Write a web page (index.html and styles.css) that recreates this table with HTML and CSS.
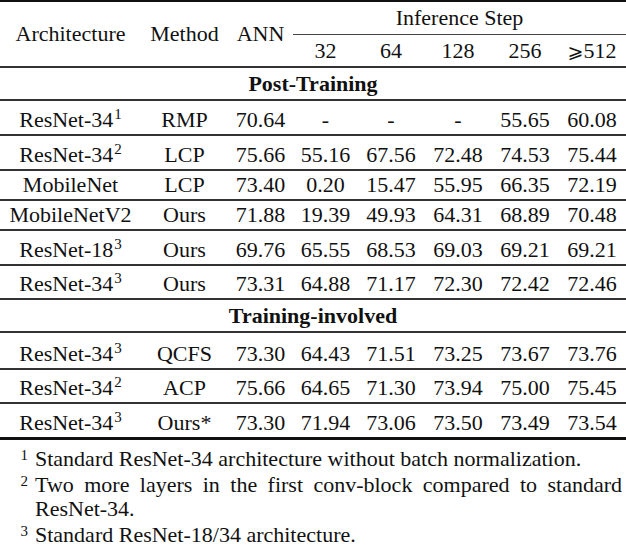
FILE: index.html
```html
<!DOCTYPE html>
<html>
<head>
<meta charset="utf-8">
<link rel="stylesheet" href="styles.css">
</head>
<body>
<div class="page">
<table class="results">
  <colgroup>
    <col class="c-arch"><col class="c-meth"><col class="c-ann">
    <col class="c-32"><col class="c-64"><col class="c-128"><col class="c-256"><col class="c-512">
  </colgroup>
  <thead>
    <tr class="hrow1">
      <th rowspan="2" class="hcell rs">Architecture</th>
      <th rowspan="2" class="hcell rs">Method</th>
      <th rowspan="2" class="hcell rs">ANN</th>
      <th colspan="5" class="hcell steps">Inference Step</th>
    </tr>
    <tr class="hrow2">
      <th class="hcell sub">32</th>
      <th class="hcell sub">64</th>
      <th class="hcell sub">128</th>
      <th class="hcell sub">256</th>
      <th class="hcell sub"><span class="geq">⩾</span>512</th>
    </tr>
  </thead>
  <tbody>
    <tr class="section"><td colspan="8">Post-Training</td></tr>
    <tr class="r33"><td>ResNet-34<span class="sup">1</span></td><td>RMP</td><td>70.64</td><td>-</td><td>-</td><td>-</td><td>55.65</td><td>60.08</td></tr>
    <tr class="r33"><td>ResNet-34<span class="sup">2</span></td><td>LCP</td><td>75.66</td><td>55.16</td><td>67.56</td><td>72.48</td><td>74.53</td><td>75.44</td></tr>
    <tr class="r28"><td>MobileNet</td><td>LCP</td><td>73.40</td><td>0.20</td><td>15.47</td><td>55.95</td><td>66.35</td><td>72.19</td></tr>
    <tr class="r28"><td>MobileNetV2</td><td>Ours</td><td>71.88</td><td>19.39</td><td>49.93</td><td>64.31</td><td>68.89</td><td>70.48</td></tr>
    <tr class="r33"><td>ResNet-18<span class="sup">3</span></td><td>Ours</td><td>69.76</td><td>65.55</td><td>68.53</td><td>69.03</td><td>69.21</td><td>69.21</td></tr>
    <tr class="r32"><td>ResNet-34<span class="sup">3</span></td><td>Ours</td><td>73.31</td><td>64.88</td><td>71.17</td><td>72.30</td><td>72.42</td><td>72.46</td></tr>
    <tr class="section"><td colspan="8">Training-involved</td></tr>
    <tr class="r35"><td>ResNet-34<span class="sup">3</span></td><td>QCFS</td><td>73.30</td><td>64.43</td><td>71.51</td><td>73.25</td><td>73.67</td><td>73.76</td></tr>
    <tr class="r32"><td>ResNet-34<span class="sup">2</span></td><td>ACP</td><td>75.66</td><td>64.65</td><td>71.30</td><td>73.94</td><td>75.00</td><td>75.45</td></tr>
    <tr class="r33 last"><td>ResNet-34<span class="sup">3</span></td><td>Ours*</td><td>73.30</td><td>71.94</td><td>73.06</td><td>73.50</td><td>73.49</td><td>73.54</td></tr>
  </tbody>
</table>
<div class="notes">
  <div class="note"><span class="mark">1</span><span class="ntext">Standard ResNet-34 architecture without batch normalization.</span></div>
  <div class="note"><span class="mark">2</span><span class="ntext">Two more layers in the first conv-block compared to standard ResNet-34.</span></div>
  <div class="note"><span class="mark">3</span><span class="ntext">Standard ResNet-18/34 architecture.</span></div>
</div>
</div>
</body>
</html>
```

FILE: styles.css
```css
html, body {
  margin: 0;
  padding: 0;
  background: #fff;
}
.page {
  width: 626px;
  font-family: "Liberation Serif", "Times New Roman", serif;
  font-size: 22px;
  color: #111;
}
.results {
  width: 626px;
  table-layout: fixed;
  border-collapse: separate;
  border-spacing: 0;
  border-top: 2px solid #111;
  font-family: "Liberation Serif", "Times New Roman", serif;
}
.c-arch { width: 141px; }
.c-meth { width: 87px; }
.c-ann { width: 65px; }
.c-32 { width: 65px; }
.c-64 { width: 66px; }
.c-128 { width: 68px; }
.c-256 { width: 66px; }
.c-512 { width: 68px; }

.results th, .results td {
  padding: 0;
  text-align: center;
  white-space: nowrap;
  line-height: 22px;
  font-weight: normal;
}
.hcell { vertical-align: middle; }
.hrow1 .hcell { height: 32px; }
.hrow2 .hcell { height: 31px; }
.rs, .sub { border-bottom: 2px solid #333; }
.steps { border-bottom: 1px solid #444; }
.geq { font-family: "DejaVu Serif", "DejaVu Sans", serif; font-size: 19px; }

.section td {
  height: 31px;
  font-weight: bold;
  vertical-align: middle;
  border-bottom: 2px solid #333;
}
tbody tr:not(.section) td {
  vertical-align: bottom;
  padding-bottom: 3px;
  border-bottom: 2px solid #333;
}
.r28 td { height: 25px; }
.r32 td { height: 29px; }
.r33 td { height: 30px; }
.r35 td { height: 32px; }
tbody tr.last td { border-bottom: 3px solid #111; }

.sup {
  font-size: 15px;
  line-height: 0;
  vertical-align: 8px;
  margin-left: 1px;
}

.notes {
  margin-top: 7px;
  padding-right: 4px;
}
.note {
  display: flex;
  line-height: 24px;
  margin-bottom: 2px;
}
.note:last-child {
  margin-bottom: 0;
}
.mark {
  flex: 0 0 35px;
  box-sizing: border-box;
  text-align: right;
  padding-right: 7px;
  font-size: 15px;
  line-height: 17px;
}
.ntext {
  flex: 1;
  text-align: justify;
}
```
